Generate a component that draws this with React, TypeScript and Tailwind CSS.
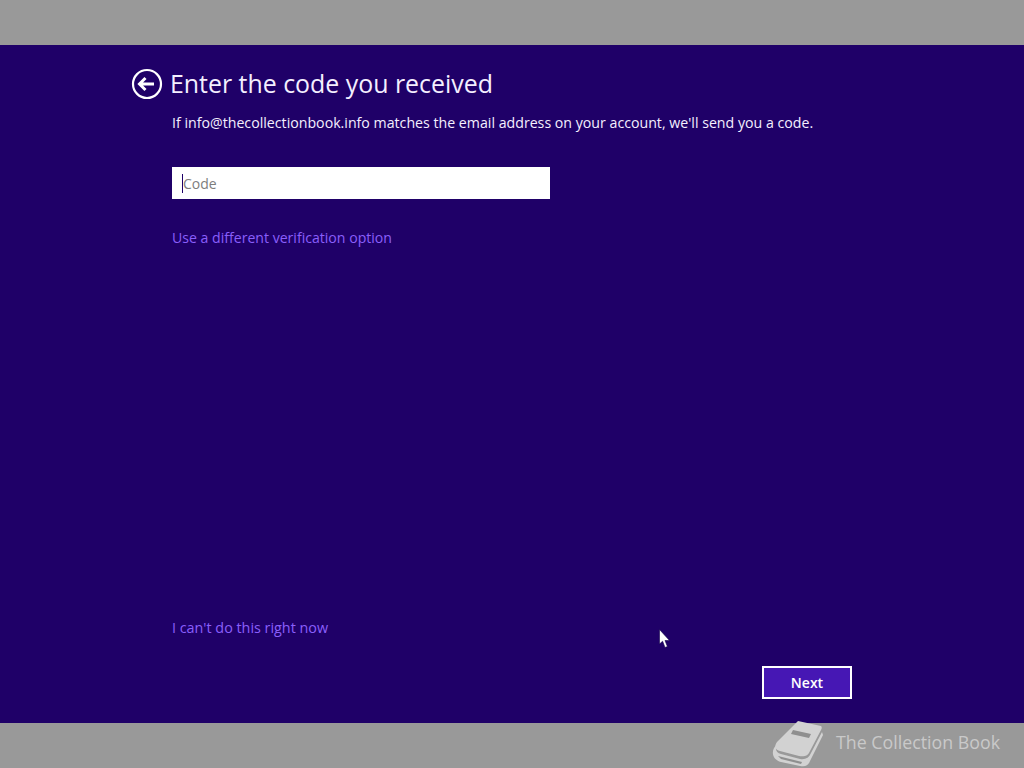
const BookLogo = () => (
  <svg width="52" height="48" viewBox="0 0 52 48" className="block">
    <path d="M26 1 L49 6 C50 7 50 8 49 10 L38 31 C36 36 32 37 27 36 L8 31 C3 30 2 26 5 22 Z" fill="#d2d2d2" />
    <path d="M50 12 L51 15 L38 41 C36 46 33 47 28 46 L9 42 C2 40 -1 34 2 28 L5 24 C3 29 4 33 9 34 L28 39 C33 40 37 38 39 33 Z" fill="#d2d2d2" />
    <path d="M6 36 L30 42 L29 44 L9 39 Z" fill="#8f8f8f" />
    <path d="M21 10 L39 14 L37 18 L19 14 Z" fill="#8f8f8f" />
  </svg>
);

const Cursor = () => (
  <svg width="12" height="20" viewBox="0 0 12 20" className="absolute left-[659px] top-[629px]">
    <path d="M0.5 0.5 L0.5 15 L3.6 12.2 L6 18.5 L8.4 17.5 L6 11.5 L10.5 11.5 Z" fill="#ffffff" stroke="#10004a" strokeWidth="0.6" />
  </svg>
);

export default function App() {
  return (
    <div
      className="relative flex h-[768px] w-[1024px] flex-col overflow-hidden bg-[#1f0068] text-white"
      style={{ fontFamily: '"Open Sans", "Noto Sans", sans-serif' }}
    >
      <div className="h-[45px] shrink-0 bg-[#999999]" />

      <main className="flex min-h-0 flex-1 flex-col pl-[172px] pr-[172px]">
        <div className="mt-[22px] -ml-[41px] flex h-[34px] items-center gap-[7px]">
          <button className="flex h-[32px] w-[32px] shrink-0 items-center justify-center">
            <svg width="32" height="32" viewBox="0 0 32 32">
              <circle cx="16" cy="16" r="14" fill="none" stroke="#ffffff" strokeWidth="2.2" />
              <path d="M8.5 16 H23 M14.5 10 L8.5 16 L14.5 22" fill="none" stroke="#ffffff" strokeWidth="3" />
            </svg>
          </button>
          <h1 className="-mt-[3px] whitespace-nowrap text-[24.9px] font-normal leading-[34px] text-[#f4efff]">
            Enter the code you received
          </h1>
        </div>

        <p className="mt-[12px] whitespace-nowrap text-[14.18px] leading-[20px] text-[#f4efff]">
          If info@thecollectionbook.info matches the email address on your account, we'll send you a code.
        </p>

        <div className="mt-[34px] flex h-[32px] w-[378px] items-center bg-white pl-[10px]">
          <span className="h-[19px] w-px bg-[#1f0068]" />
          <span className="mt-[2px] text-[14px] leading-[20px] text-[#7d7d7d]">Code</span>
        </div>

        <a className="mt-[29px] block text-[14.1px] leading-[20px] text-[#8a5ffb]">
          Use a different verification option
        </a>

        <a className="mt-auto mb-[85px] block text-[14.35px] leading-[20px] text-[#8a5ffb]">
          I can't do this right now
        </a>
      </main>

      <div className="relative h-[45px] shrink-0 bg-[#999999]">
        <button className="absolute right-[172px] top-[-57px] h-[33px] w-[90px] border-2 border-white bg-[#4617b4] text-[14px] font-semibold text-white">
          Next
        </button>
        <div className="absolute right-[24px] top-[-3px] flex items-center gap-[12px]">
          <BookLogo />
          <span className="-mt-[4px] text-[17.8px] leading-[24px] text-[#c9c9c9]">The Collection Book</span>
        </div>
      </div>

      <Cursor />
    </div>
  );
}
